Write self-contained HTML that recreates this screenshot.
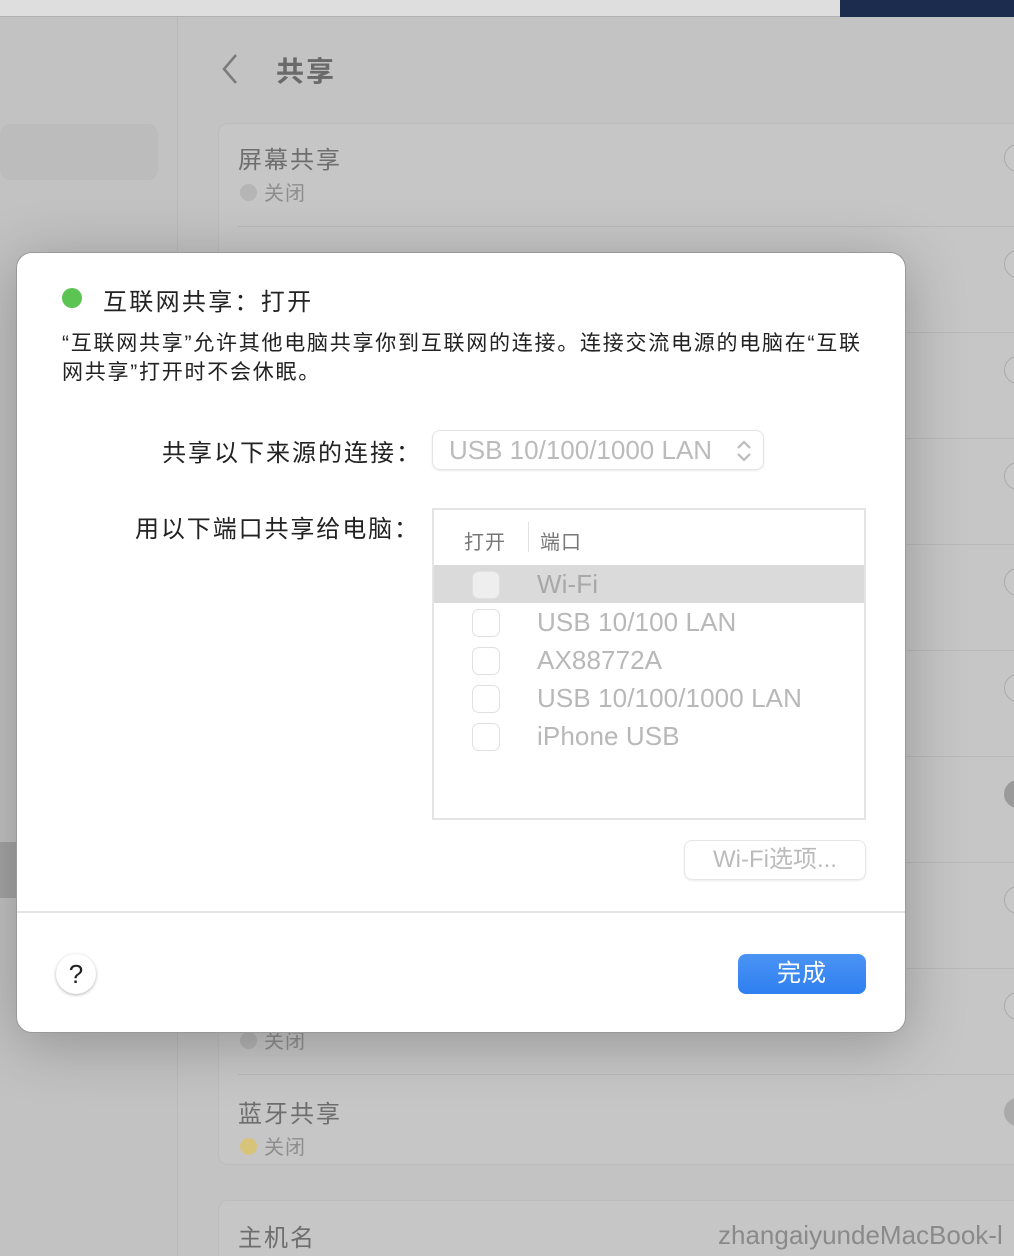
<!DOCTYPE html>
<html><head><meta charset="utf-8"><style>
*{margin:0;padding:0;box-sizing:border-box}
html,body{width:1014px;height:1256px;overflow:hidden}
body{background:#c3c3c3;font-family:"Liberation Sans","Noto Sans CJK SC",sans-serif;position:relative}
.a{position:absolute}
.card{position:absolute;left:218px;width:820px;background:#c6c6c6;border:1px solid #bdbdbd;border-radius:10px}
.t{position:absolute;left:238px;font-size:24px;color:#6e6e6e;letter-spacing:2px}
.s{position:absolute;left:264px;font-size:20px;color:#8e8e8e}
.dot{position:absolute;left:240px;width:17px;height:17px;border-radius:50%;background:#b5b5b5}
.tog{position:absolute;left:1004px;width:30px;height:28px;border-radius:14px;border:1px solid #aaa;background:#c8c8c8}
.sep{position:absolute;left:238px;width:800px;height:1px;background:#b9b9b9}
.cb{position:absolute;left:472px;width:28px;height:28px;border:1px solid #e0e0e0;border-radius:7px;background:#fff}
.pt{position:absolute;left:537px;font-size:26px;color:#b8b8b8;letter-spacing:0.1px}
</style></head><body>
<div class="a" style="left:0;top:0;width:840px;height:17px;background:#dedede;border-bottom:1px solid #b0b0b0"></div>
<div class="a" style="left:840px;top:0;width:174px;height:17px;background:#1b2c4f"></div>
<div class="a" style="left:0;top:17px;width:178px;height:1239px;background:#c2c2c2;border-right:1px solid #b9b9b9"></div>
<div class="a" style="left:0;top:124px;width:158px;height:56px;background:#bcbcbc;border-radius:10px"></div>
<div class="a" style="left:0;top:842px;width:16px;height:56px;background:#a5a5a5"></div>
<svg class="a" style="left:218px;top:52px" width="24" height="34"><path d="M18 3 L6 17 L18 31" stroke="#7a7a7a" stroke-width="2.5" fill="none"/></svg>
<div class="a" style="left:276px;top:50px;font-size:28px;font-weight:bold;color:#6a6a6a;letter-spacing:2px">共享</div>
<div class="card" style="top:123px;height:1042px"></div>
<div class="card" style="top:1200px;height:80px"></div>
<div class="t" style="top:140px">屏幕共享</div><div class="dot" style="top:184px"></div><div class="s" style="top:177px;letter-spacing:1px">关闭</div>
<div class="sep" style="top:226px"></div><div class="sep" style="top:332px"></div><div class="sep" style="top:438px"></div><div class="sep" style="top:544px"></div><div class="sep" style="top:650px"></div><div class="sep" style="top:756px"></div><div class="sep" style="top:862px"></div><div class="sep" style="top:968px"></div><div class="sep" style="top:1074px"></div>
<div class="tog" style="top:144px"></div><div class="tog" style="top:250px"></div><div class="tog" style="top:356px"></div><div class="tog" style="top:462px"></div><div class="tog" style="top:568px"></div><div class="tog" style="top:674px"></div><div class="tog" style="top:780px;background:#9a9a9a;border-color:#9a9a9a"></div><div class="tog" style="top:886px"></div><div class="tog" style="top:992px"></div><div class="tog" style="top:1098px;background:#aaa"></div>
<div class="dot" style="top:1032px"></div><div class="s" style="top:1025px;letter-spacing:1px">关闭</div>
<div class="t" style="top:1094px">蓝牙共享</div><div class="dot" style="top:1138px;background:#d8c37a"></div><div class="s" style="top:1131px;letter-spacing:1px">关闭</div>
<div class="t" style="top:1218px">主机名</div>
<div class="a" style="left:718px;top:1220px;font-size:26px;color:#8a8a8a;white-space:nowrap">zhangaiyundeMacBook-l</div>

<div class="a" style="left:16px;top:252px;width:890px;height:781px;background:#fff;border-radius:16px;border:1px solid #999;box-shadow:0 10px 60px rgba(0,0,0,.25)"></div>
<div class="a" style="left:62px;top:288px;width:20px;height:20px;border-radius:50%;background:#5bc453"></div>
<div class="a" style="left:103px;top:282px;font-size:24px;color:#222;letter-spacing:2.3px">互联网共享：打开</div>
<div class="a" style="left:62px;top:329px;font-size:21px;line-height:29px;color:#222;letter-spacing:1.75px;white-space:nowrap">“互联网共享”允许其他电脑共享你到互联网的连接。连接交流电源的电脑在“互联<br>网共享”打开时不会休眠。</div>
<div class="a" style="left:162px;top:433px;font-size:24px;color:#222;letter-spacing:2px">共享以下来源的连接：</div>
<div class="a" style="left:432px;top:430px;width:332px;height:40px;border:1px solid #e4e4e4;border-radius:8px;box-shadow:0 1px 2px rgba(0,0,0,.08)"></div>
<div class="a" style="left:449px;top:435px;font-size:26px;color:#bbb">USB 10/100/1000 LAN</div>
<svg class="a" style="left:734px;top:438px" width="20" height="26"><path d="M4 10 L10 4 L16 10 M4 16 L10 22 L16 16" stroke="#bbb" stroke-width="2.2" fill="none"/></svg>
<div class="a" style="left:135px;top:509px;font-size:24px;color:#222;letter-spacing:1.9px">用以下端口共享给电脑：</div>
<div class="a" style="left:432px;top:508px;width:434px;height:312px;border:2px solid #e4e4e4;background:#fff"></div>
<div class="a" style="left:464px;top:526px;font-size:20px;color:#777;letter-spacing:1px">打开</div>
<div class="a" style="left:528px;top:522px;width:1px;height:30px;background:#e0e0e0"></div>
<div class="a" style="left:540px;top:526px;font-size:20px;color:#777;letter-spacing:1px">端口</div>
<div class="a" style="left:434px;top:565px;width:430px;height:38px;background:#dadada"></div>
<div class="cb" style="top:571px;background:#eee"></div><div class="pt" style="top:569px;color:#a8a8a8">Wi-Fi</div>
<div class="cb" style="top:609px"></div><div class="pt" style="top:607px">USB 10/100 LAN</div>
<div class="cb" style="top:647px"></div><div class="pt" style="top:645px">AX88772A</div>
<div class="cb" style="top:685px"></div><div class="pt" style="top:683px">USB 10/100/1000 LAN</div>
<div class="cb" style="top:723px"></div><div class="pt" style="top:721px">iPhone USB</div>
<div class="a" style="left:684px;top:840px;width:182px;height:40px;border:1px solid #e6e6e6;border-radius:8px;box-shadow:0 1px 2px rgba(0,0,0,.08);font-size:24px;color:#bbb;text-align:center;line-height:38px">Wi-Fi选项...</div>
<div class="a" style="left:17px;top:911px;width:888px;height:2px;background:#e4e4e4"></div>
<div class="a" style="left:56px;top:954px;width:40px;height:40px;border-radius:50%;background:#fff;box-shadow:0 1px 3px rgba(0,0,0,.3);text-align:center;line-height:40px;font-size:26px;color:#222">?</div>
<div class="a" style="left:738px;top:954px;width:128px;height:40px;border-radius:8px;background:linear-gradient(#4b94f5,#2f7ff1);color:#fff;font-size:24px;text-align:center;line-height:39px;letter-spacing:1px">完成</div>
</body></html>
